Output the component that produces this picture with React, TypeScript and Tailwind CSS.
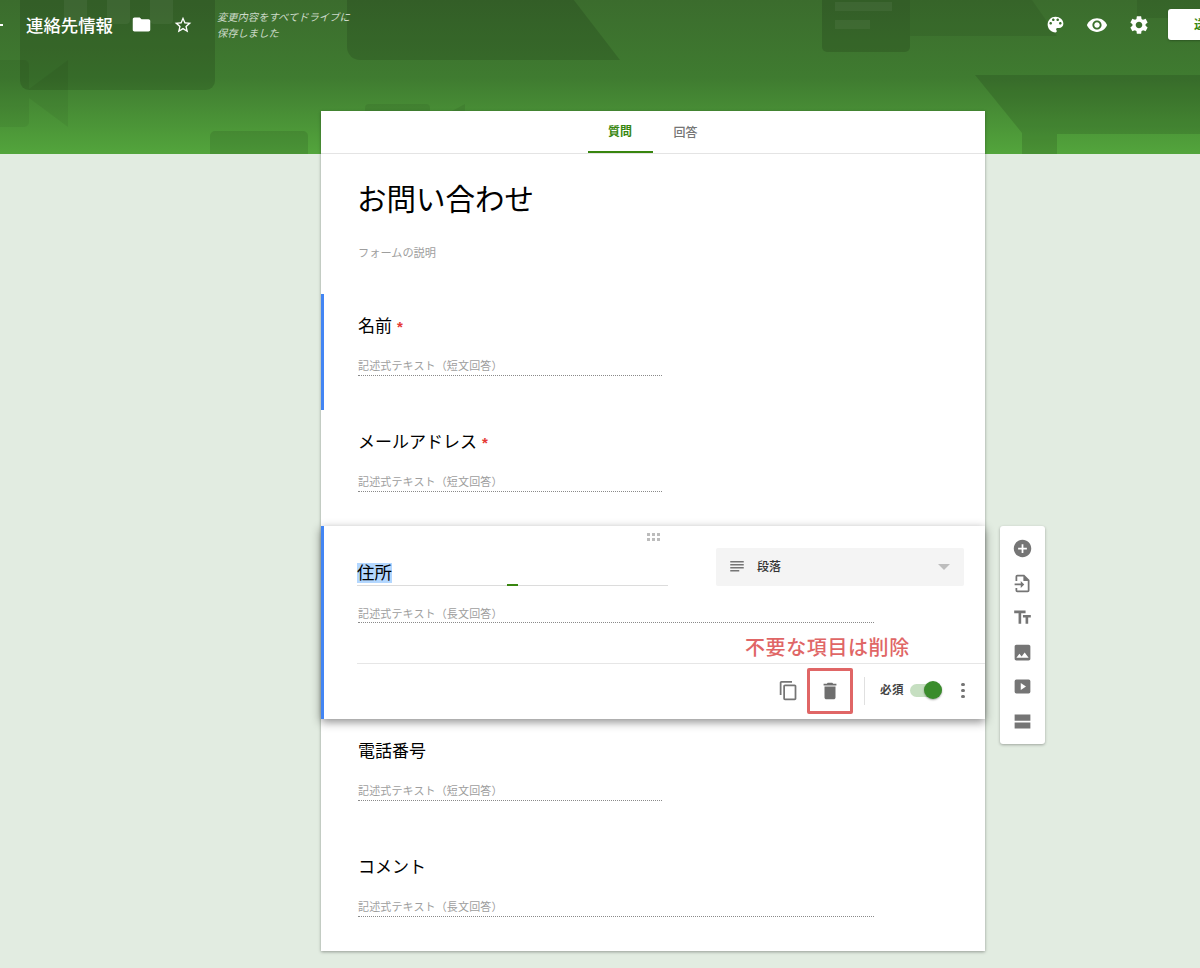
import type { ReactNode } from "react";

function Icon({ d, className }: { d: string; className?: string }) {
	return (
		<svg viewBox="0 0 24 24" fill="currentColor" fillRule="evenodd" className={className}>
			<path d={d} />
		</svg>
	);
}

const icons = {
	back: "M20 11H7.83l5.59-5.59L12 4l-8 8 8 8 1.41-1.41L7.83 13H20v-2z",
	folder: "M10 4H4c-1.1 0-1.99.9-1.99 2L2 18c0 1.1.9 2 2 2h16c1.1 0 2-.9 2-2V8c0-1.1-.9-2-2-2h-8l-2-2z",
	star: "M22 9.24l-7.19-.62L12 2 9.19 8.63 2 9.24l5.46 4.73L5.82 21 12 17.27 18.18 21l-1.63-7.03L22 9.24zM12 15.4l-3.76 2.27 1-4.28-3.32-2.88 4.38-.38L12 6.1l1.71 4.04 4.38.38-3.32 2.88 1 4.28L12 15.4z",
	palette:
		"M12 3c-4.97 0-9 4.03-9 9s4.03 9 9 9c.83 0 1.5-.67 1.5-1.5 0-.39-.15-.74-.39-1.01-.23-.26-.38-.61-.38-.99 0-.83.67-1.5 1.5-1.5H16c2.76 0 5-2.24 5-5 0-4.42-4.03-8-9-8zm-5.5 9c-.83 0-1.5-.67-1.5-1.5S5.67 9 6.5 9 8 9.67 8 10.5 7.33 12 6.5 12zm3-4C8.67 8 8 7.33 8 6.5S8.67 5 9.5 5s1.5.67 1.5 1.5S10.33 8 9.5 8zm5 0c-.83 0-1.5-.67-1.5-1.5S13.67 5 14.5 5s1.5.67 1.5 1.5S15.33 8 14.5 8zm3 4c-.83 0-1.5-.67-1.5-1.5S16.67 9 17.5 9s1.5.67 1.5 1.5-.67 1.5-1.5 1.5z",
	eye: "M12 4.5C7 4.5 2.73 7.61 1 12c1.73 4.39 6 7.5 11 7.5s9.27-3.11 11-7.5c-1.73-4.39-6-7.5-11-7.5zM12 17c-2.76 0-5-2.24-5-5s2.24-5 5-5 5 2.24 5 5-2.24 5-5 5zm0-8c-1.66 0-3 1.34-3 3s1.34 3 3 3 3-1.34 3-3-1.34-3-3-3z",
	gear: "M19.14 12.94c.04-.3.06-.61.06-.94 0-.32-.02-.64-.07-.94l2.03-1.58c.18-.14.23-.41.12-.61l-1.92-3.32c-.12-.22-.37-.29-.59-.22l-2.39.96c-.5-.38-1.03-.7-1.62-.94l-.36-2.54c-.04-.24-.24-.41-.48-.41h-3.84c-.24 0-.43.17-.47.41l-.36 2.54c-.59.24-1.13.57-1.62.94l-2.39-.96c-.22-.08-.47 0-.59.22L2.74 8.87c-.12.21-.08.47.12.61l2.03 1.58c-.05.3-.09.63-.09.94s.02.64.07.94l-2.03 1.58c-.18.14-.23.41-.12.61l1.92 3.32c.12.22.37.29.59.22l2.39-.96c.5.38 1.03.7 1.62.94l.36 2.54c.05.24.24.41.48.41h3.84c.24 0 .44-.17.47-.41l.36-2.54c.59-.24 1.13-.56 1.62-.94l2.39.96c.22.08.47 0 .59-.22l1.92-3.32c.12-.22.07-.47-.12-.61l-2.01-1.58zM12 15.6c-1.98 0-3.6-1.62-3.6-3.6s1.62-3.6 3.6-3.6 3.6 1.62 3.6 3.6-1.62 3.6-3.6 3.6z",
	copy: "M16 1H4c-1.1 0-2 .9-2 2v14h2V3h12V1zm3 4H8c-1.1 0-2 .9-2 2v14c0 1.1.9 2 2 2h11c1.1 0 2-.9 2-2V7c0-1.1-.9-2-2-2zm0 16H8V7h11v14z",
	trash: "M6 19c0 1.1.9 2 2 2h8c1.1 0 2-.9 2-2V7H6v12zM19 4h-3.5l-1-1h-5l-1 1H5v2h14V4z",
	lines: "M3 4h18v2H3zM3 8h18v2H3zM3 12h18v2H3zM3 16h12v2H3z",
	add: "M12 2C6.48 2 2 6.48 2 12s4.48 10 10 10 10-4.48 10-10S17.52 2 12 2zm5 11h-4v4h-2v-4H7v-2h4V7h2v4h4v2z",
	importFile:
		"M6 2h8l6 6v12a2 2 0 0 1-2 2H6a2 2 0 0 1-2-2v-3h2v3h12V9h-5V4H6v5H4V4a2 2 0 0 1 2-2zM3 12h7V9l4 4-4 4v-3H3z",
	title: "M2.5 4v3h5v12h3V7h5V4h-13zm19 5h-9v3h3v7h3v-7h3V9z",
	image: "M21 19V5c0-1.1-.9-2-2-2H5c-1.1 0-2 .9-2 2v14c0 1.1.9 2 2 2h14c1.1 0 2-.9 2-2zM8.5 13.5l2.5 3.01L14.5 12l4.5 6H5l3.5-4.5z",
	video: "M5 4h14a2 2 0 0 1 2 2v12a2 2 0 0 1-2 2H5a2 2 0 0 1-2-2V6a2 2 0 0 1 2-2zM10 8v8l6-4z",
	section: "M3 4h18v7H3zM3 13h18v7H3z",
};

function HeaderArt() {
	return (
		<svg viewBox="0 0 1200 154" className="absolute inset-0 h-full w-full">
			<rect x="20" y="-20" width="195" height="110" rx="9" fill="#000" opacity="0.13" />
			<rect x="64" y="-6" width="23" height="30" rx="4" fill="#fff" opacity="0.05" />
			<rect x="107" y="-6" width="23" height="30" rx="4" fill="#fff" opacity="0.05" />
			<rect x="150" y="-6" width="23" height="30" rx="4" fill="#fff" opacity="0.05" />
			<rect x="-10" y="60" width="39" height="67" rx="5" fill="#000" opacity="0.05" />
			<polygon points="29,89 68,60 68,127 29,98" fill="#000" opacity="0.05" />
			<rect x="210" y="131" width="98" height="30" rx="5" fill="#000" opacity="0.1" />
			<path d="M347 -5H570L620 60H360a13 13 0 0 1-13-13z" fill="#000" opacity="0.12" />
			<rect x="365" y="104" width="65" height="12" rx="4" fill="#000" opacity="0.07" />
			<polygon points="450,112 465,104 465,112" fill="#000" opacity="0.07" />
			<path d="M822 -5H910V47a5 5 0 0 1-5 5H827a5 5 0 0 1-5-5z" fill="#000" opacity="0.13" />
			<rect x="835" y="2" width="57" height="9" fill="#fff" opacity="0.05" />
			<rect x="835" y="20" width="35" height="9" fill="#fff" opacity="0.05" />
			<polygon points="910,0 1032,0 1057,36 910,36" fill="#000" opacity="0.07" />
			<rect x="1137" y="-5" width="63" height="23" fill="#000" opacity="0.07" />
			<polygon points="975,75 1200,75 1200,134 1057,134 1057,154 1022,154 1022,133" fill="#000" opacity="0.12" />
		</svg>
	);
}

function Hint({ text, long, className }: { text: string; long?: boolean; className?: string }) {
	return (
		<div
			className={`border-b border-dotted border-[#8a8a8a] text-[11px] leading-[18px] tracking-[0.15px] text-[#9e9e9e] ${long ? "w-[516px]" : "w-[304px]"} ${className ?? ""}`}
		>
			{text}
		</div>
	);
}

function Question({
	label,
	required,
	hint,
	long,
	accent,
}: {
	label: string;
	required?: boolean;
	hint: string;
	long?: boolean;
	accent?: boolean;
}) {
	return (
		<div className={`h-[116px] pt-[21px] ${accent ? "border-l-[3px] border-[#4285f4] pl-[34px]" : "pl-[37px]"}`}>
			<div className="flex h-6 items-center text-[17px] leading-6 text-black">
				{label}
				{required && <span className="ml-[5px] text-[15px] font-bold text-[#e53935]">*</span>}
			</div>
			<Hint text={hint} long={long} className="mt-[18px] h-[19px]" />
		</div>
	);
}

function SideButton({ d }: { d: string }): ReactNode {
	return <Icon d={d} className="size-[21px] text-[#757575]" />;
}

function ActiveQuestion() {
	return (
		<div className="relative z-10 h-[193px] border-l-[3px] border-[#4285f4] bg-white shadow-[0_3px_9px_rgba(0,0,0,0.45)]">
			<div className="absolute left-[323px] top-[7px] grid grid-cols-3 gap-[2px]">
				{Array.from({ length: 6 }).map((_, i) => (
					<span key={i} className="size-[3px] bg-[#bcbcbc]" />
				))}
			</div>

			<div className="flex items-start pt-[22px] pl-[33px] pr-[21px]">
				<div className="relative mt-[14px] h-[24px] w-[311px] border-b border-[#dcdcdc]">
					<span className="mt-[1px] block w-fit bg-[#b3d7ff] text-[17.5px] leading-[20px] text-black">住所</span>
					<span className="absolute left-[150px] top-[22px] h-[2px] w-[11px] bg-[#38860f]" />
				</div>
				<div className="ml-auto flex h-[38px] w-[248px] items-center rounded-[2px] bg-[#f4f4f4] pl-[12px] pr-[14px]">
					<Icon d={icons.lines} className="size-[18px] text-[#757575]" />
					<span className="ml-[11px] text-xs font-medium text-[#333]">段落</span>
					<span className="ml-auto size-0 border-x-[6px] border-t-[6px] border-x-transparent border-t-[#bdbdbd]" />
				</div>
			</div>

			<Hint text="記述式テキスト（長文回答）" long className="ml-[34px] mt-[19px] h-[18px]" />

			<div className="mt-[40px] ml-[33px] flex h-[54px] items-center justify-end border-t border-[#e6e6e6] pr-[11px]">
				<Icon d={icons.copy} className="size-[21px] text-[#757575]" />
				<Icon d={icons.trash} className="ml-[20px] size-[22px] text-[#6e6e6e]" />
				<span className="ml-[23px] h-[28px] w-px bg-[#e0e0e0]" />
				<span className="ml-[15px] text-[11.5px] font-bold tracking-[0.5px] text-[#444]">必須</span>
				<span className="relative ml-[6px] h-[13px] w-[32px] rounded-full bg-[#c6dfc1]">
					<span className="absolute -top-[3px] right-0 size-[18px] rounded-full bg-[#3a8c2c] shadow-[0_1px_2px_rgba(0,0,0,0.35)]" />
				</span>
				<span className="ml-[10px] flex w-[22px] flex-col items-center gap-[2.5px]">
					<span className="size-[3.5px] rounded-full bg-[#757575]" />
					<span className="size-[3.5px] rounded-full bg-[#757575]" />
					<span className="size-[3.5px] rounded-full bg-[#757575]" />
				</span>
			</div>

			<span className="absolute left-[421px] top-[107px] whitespace-nowrap text-[20px] font-medium leading-[30px] tracking-[0.6px] text-[#e06666]">
				不要な項目は削除
			</span>
			<span className="absolute left-[483px] top-[142px] h-[46px] w-[46px] rounded-[2px] border-[3px] border-[#e06666]" />

			<div className="absolute left-[676px] top-0 flex h-[218px] w-[45px] flex-col items-center gap-[13.6px] rounded-[3px] bg-white pt-[12px] shadow-[0_1px_3px_rgba(0,0,0,0.3)]">
				<SideButton d={icons.add} />
				<SideButton d={icons.importFile} />
				<SideButton d={icons.title} />
				<SideButton d={icons.image} />
				<SideButton d={icons.video} />
				<SideButton d={icons.section} />
			</div>
		</div>
	);
}

export default function App() {
	return (
		<div className="h-[968px] w-[1200px] overflow-hidden bg-[#e2ece1] font-['Liberation_Sans','Noto_Sans_CJK_JP',sans-serif]">
			<header className="relative h-[154px] bg-gradient-to-b from-[#3b6c2d] via-[#3f7b30] via-50% to-[#53a53c]">
				<HeaderArt />
				<div className="relative flex h-[49px] items-center text-white">
					<Icon d={icons.back} className="-ml-[17px] size-6 shrink-0" />
					<h1 className="ml-[19px] mt-[2px] text-[17.4px] font-medium leading-6">連絡先情報</h1>
					<Icon d={icons.folder} className="ml-[18px] size-[21px] shrink-0" />
					<Icon d={icons.star} className="ml-[21px] size-[20px] shrink-0" />
					<p className="ml-[24px] mt-[3px] w-[140px] text-[10.3px] italic leading-4 text-white/75">
						変更内容をすべてドライブに保存しました
					</p>
					<Icon d={icons.palette} className="ml-auto size-[21px] shrink-0" />
					<Icon d={icons.eye} className="ml-[20px] size-[22px] shrink-0" />
					<Icon d={icons.gear} className="ml-[20px] size-[22px] shrink-0" />
					<button className="-mr-[44px] ml-[18px] h-[31px] w-[76px] shrink-0 rounded-[3px] bg-white text-xs font-bold text-[#38860f] shadow-[0_1px_2px_rgba(0,0,0,0.25)]">
						送信
					</button>
				</div>
			</header>

			<main className="relative -mt-[43px] ml-[321px] h-[840px] w-[664px] bg-white shadow-[0_1px_3px_rgba(0,0,0,0.35)]">
				<nav className="flex h-[43px] justify-center border-b border-[#e4e4e4]">
					<div className="flex h-[42px] w-[65px] items-center justify-center border-b-2 border-[#38860f] pt-[2px] text-xs font-bold text-[#38860f]">
						質問
					</div>
					<div className="flex h-[42px] w-[66px] items-center justify-center pt-[2px] text-xs font-medium text-[#757575]">
						回答
					</div>
				</nav>

				<div className="h-[140px] pl-[36px]">
					<h2 className="pt-[24px] text-[29.5px] leading-[44px] text-black">お問い合わせ</h2>
					<p className="ml-[1px] mt-[23px] text-[11.2px] leading-4 text-[#9e9e9e]">フォームの説明</p>
				</div>

				<Question accent label="名前" required hint="記述式テキスト（短文回答）" />
				<Question label="メールアドレス" required hint="記述式テキスト（短文回答）" />
				<ActiveQuestion />
				<Question label="電話番号" hint="記述式テキスト（短文回答）" />
				<Question label="コメント" hint="記述式テキスト（長文回答）" long />
			</main>
		</div>
	);
}
